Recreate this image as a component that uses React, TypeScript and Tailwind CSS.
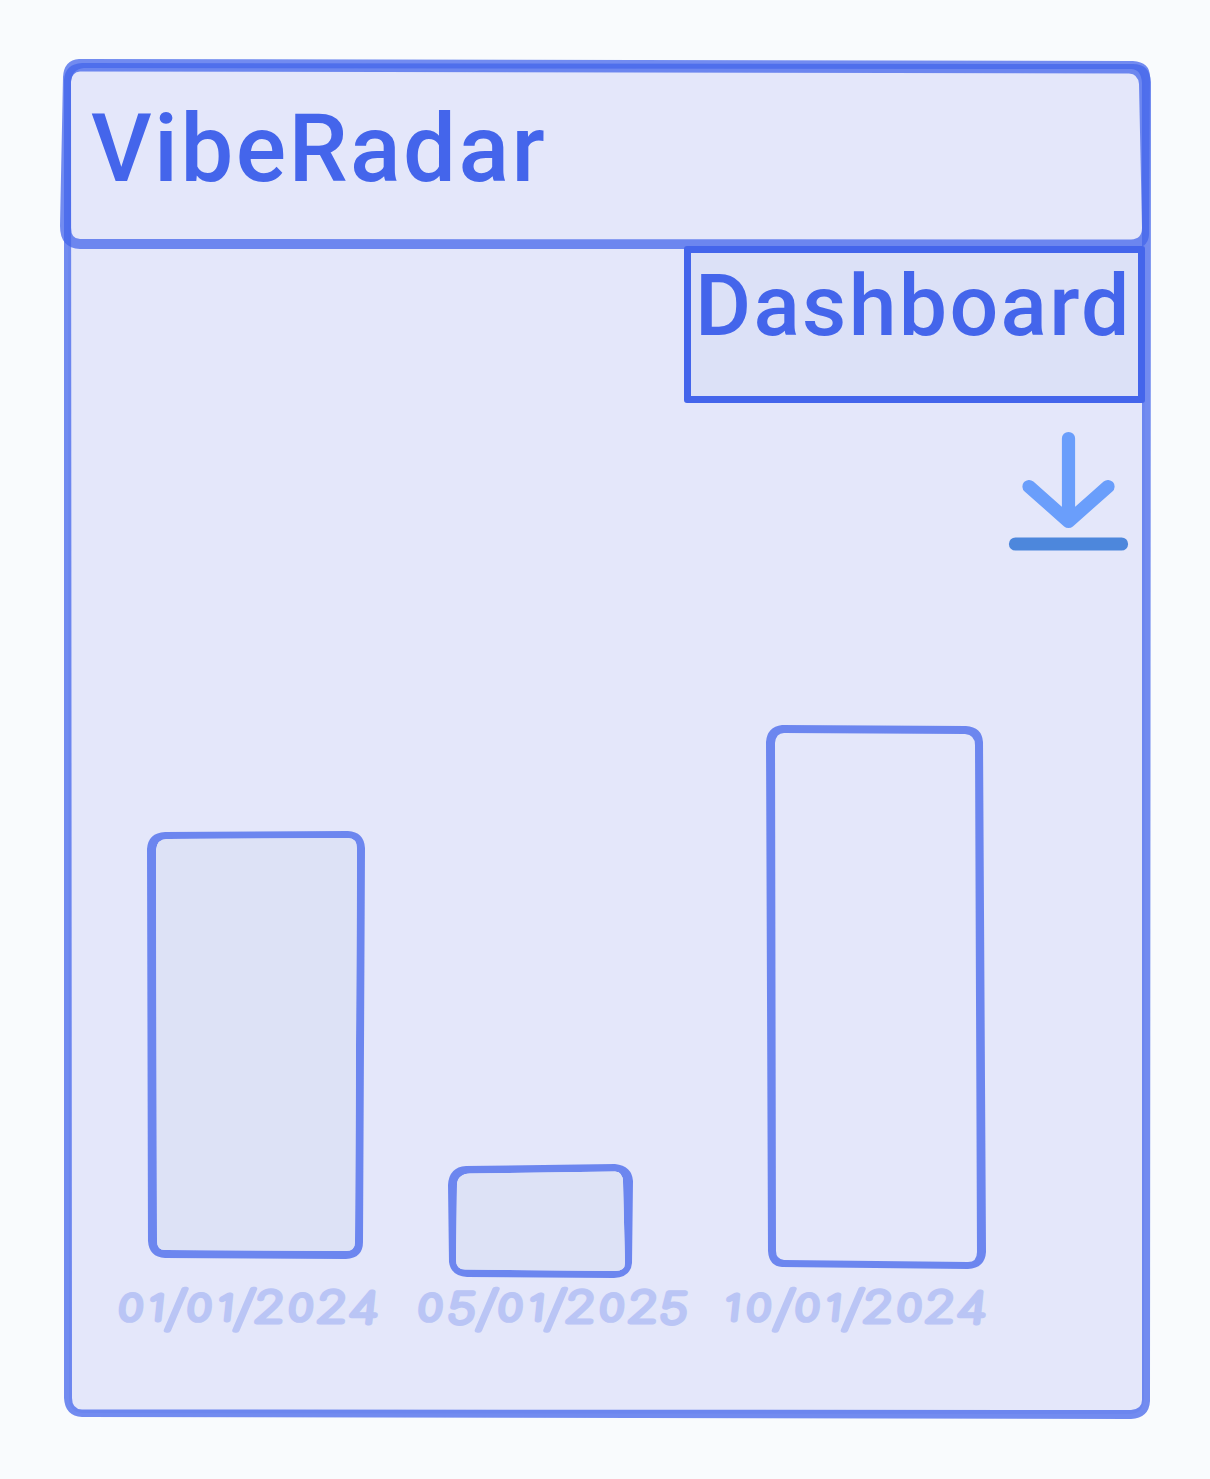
import type { ReactNode } from "react";

// Hand-drawn outline laid over its panel; coordinates are local to the panel's box.
function Sketch({ d, fill = "none" }: { d: string; fill?: string }) {
  return (
    <svg className="pointer-events-none absolute inset-0 h-full w-full overflow-visible" aria-hidden="true">
      <path d={d} fillRule="evenodd" fill="#4465eb" fillOpacity="0.75" />
      {fill !== "none" && <path d={d.slice(d.lastIndexOf("M"))} fill={fill} />}
    </svg>
  );
}

// Font size and baseline of each character, for an uneven handwritten line.
const glyphs: Record<string, [number, number]> = {
  "0": [34.5, -2],
  "1": [34.5, -2],
  "/": [47, 3],
  "2": [42.5, 0],
  "4": [42.5, 1],
  "5": [41.5, 1],
};

const stretch = 1.2;

function DateLabel({ value, centers, className }: { value: string; centers: number[]; className: string }) {
  return (
    <svg className={className} role="img" aria-label={value}>
      <text
        transform={`translate(0 43) skewX(-6) scale(${stretch} 1)`}
        textAnchor="middle"
        fontFamily="Inter, sans-serif"
        fontWeight="100"
        fill="#bac5f5"
        stroke="#bac5f5"
        strokeWidth="5"
        strokeLinejoin="round"
        strokeLinecap="round"
      >
        {value.split("").map((c, i) => (
          <tspan key={i} x={(centers[i] - 1.5) / stretch} y={glyphs[c][1]} fontSize={glyphs[c][0]}>
            {c}
          </tspan>
        ))}
      </text>
    </svg>
  );
}

function Column({ className, children }: { className: string; children: ReactNode }) {
  return <div className={`flex flex-col items-start justify-end ${className}`}>{children}</div>;
}

export default function App() {
  return (
    <main className="h-[1479px] w-[1210px] bg-[#f9fbfd] px-16 pt-[60px]">
      <section className="relative isolate flex h-[1359px] w-[1087px] flex-col">
        <svg className="pointer-events-none absolute inset-0 -z-10 h-full w-full overflow-visible" aria-hidden="true">
          <path
            d="M14 7L1067 8Q1080 8 1081 21L1080 1339Q1079 1353 1067 1354L18 1353Q5 1352 5 1338L4 21Q5 8 18 7Z"
            fill="#e4e7fa"
          />
        </svg>
        <Sketch d="M18 3L1069 4Q1086 4 1087 22L1086 1341Q1085 1358 1067 1359L18 1357Q1 1356 0 1338L0 20Q1 4 18 3Z M20 8L1067 9Q1077 9 1078 23L1078 1340Q1078 1349 1067 1350L18 1349.5Q8 1349 8 1338L7 22Q8 9 20 8Z" />

        <header className="relative h-[188px] shrink-0">
          <Sketch d="M15 -1L1069 1Q1086 2 1086 17L1085 175Q1084 189 1066 189L16 189Q-4 188 -4 166L-1 17Q0 0 15 -1Z M16 11.5L1065 13.5Q1074 14 1075 24L1078 168Q1078 179 1067 179.5L16 179Q7 179 7 168L7 21Q8 12 16 11.5Z" />
          <h1 className="relative ml-[27px] pt-[34px] font-['Roboto'] text-[94px] leading-[110px] font-medium tracking-[2.4px] text-[#4465eb]">
            VibeRadar
          </h1>
        </header>

        <nav className="relative mt-[-2px] ml-[620px] h-[157px] w-[461px] shrink-0 rounded-[3px] border-[7px] border-[#4465eb] bg-[#dce1f7]">
          <span className="block pl-1 font-['Roboto'] text-[86px] leading-[106px] font-medium tracking-[2.3px] whitespace-nowrap text-[#4465eb]">
            Dashboard
          </span>
        </nav>

        <button aria-label="Download" className="mt-[28px] ml-[944px] h-[122px] w-[122px] shrink-0">
          <svg viewBox="0 0 122 122" className="h-full w-full" fill="none" strokeWidth="13.2" strokeLinecap="round" strokeLinejoin="round">
            <path d="M60.5 7.5V90M21 55.5L60.5 90.5L100 55.5" stroke="#6a9efb" />
            <path d="M7.5 113H113.5" stroke="#4d87dc" />
          </svg>
        </button>

        <div className="flex h-[794px] shrink-0 items-end pl-[50px]">
          <Column className="mb-2 w-[300px]">
            <div className="relative ml-[33px] h-[428px] w-[218px]">
              <Sketch
                fill="#dde2f6"
                d="M18 1L201 0Q217 1 218 17L216 411Q216 427 199 428L18 427Q2 426 1 410L0 18Q1 2 18 1Z M20 8L201 7Q210 7 210 18L208 411Q208 420 199 420L18 419Q10 419 10 410L9 19Q10 8 20 8Z"
              />
            </div>
            <DateLabel
              value="01/01/2024"
              centers={[17, 43, 62.5, 85.5, 112, 131, 155.5, 187, 218, 250]}
              className="mt-[20px] h-[60px] w-[280px] overflow-visible"
            />
          </Column>
          <Column className="mb-2 w-[308px]">
            <div className="relative ml-[34px] h-[114px] w-[187px]">
              <Sketch
                fill="#dde2f6"
                d="M18 1L167 -1Q184 1 185 16L184 98Q183 112 166 113L19 112Q3 111 1 97L0 20Q1 2 18 1Z M22 8.5L167 6.5Q175 7 175 17L177 98Q177 106 167 106L18 104.5Q8 105 8 95L9 19Q10 9 22 8.5Z"
              />
            </div>
            <DateLabel
              value="05/01/2025"
              centers={[16.5, 48, 73.5, 96.5, 123, 142, 166.5, 198, 229, 260]}
              className="h-[60px] w-[280px] overflow-visible"
            />
          </Column>
          <Column className="mb-2 w-[280px]">
            <div className="relative ml-[44px] h-[544px] w-[219px]">
              <Sketch d="M16 0L200 1Q216 2 217 17L220 527Q219 543 202 544L16 542Q3 541 2 526L0 17Q1 2 16 0Z M18 8L199 9Q209 10 209 20L211 527Q211 537 202 537L18 535Q10 534 10 526L9 18Q10 8 18 8Z" />
            </div>
            <DateLabel
              value="10/01/2024"
              centers={[11, 37, 62.5, 85.5, 112, 131.5, 156, 187.5, 218, 250]}
              className="mt-[10px] h-[60px] w-[280px] overflow-visible"
            />
          </Column>
        </div>
      </section>
    </main>
  );
}
